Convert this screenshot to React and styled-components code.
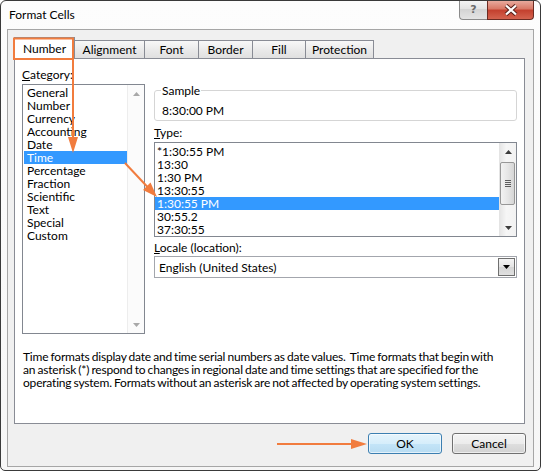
import React from 'react';
import styled, { createGlobalStyle } from 'styled-components';

const GlobalStyle = createGlobalStyle`
  html, body {
    margin: 0;
    padding: 0;
    background: #ffffff;
  }
  body {
    font-family: Lato, "Noto Sans", sans-serif;
    font-size: 12px;
    color: #000;
  }
`;

const Window = styled.div`
  position: relative;
  width: 541px;
  height: 471px;
  box-sizing: border-box;
  border: 1px solid #3a3a3a;
  border-radius: 6px 6px 5px 5px;
  background: linear-gradient(#fdfdfd, #f6f6f6);
  display: flex;
  flex-direction: column;
  overflow: hidden;
`;

const TitleBar = styled.div`
  height: 28px;
  flex: none;
  display: flex;
  justify-content: space-between;
  align-items: flex-start;
`;

const Title = styled.div`
  line-height: 28px;
  padding-left: 8px;
`;

const Caption = styled.div`
  display: flex;
  margin-top: -1px;
  margin-right: 6px;
`;

const HelpButton = styled.div`
  width: 28px;
  height: 20px;
  box-sizing: border-box;
  border: 1px solid #8a8a8a;
  border-top: none;
  border-right: none;
  border-radius: 0 0 0 4px;
  background: linear-gradient(#f6f6f6, #e2e2e2 50%, #d4d4d4 50%, #e4e4e4);
  display: flex;
  align-items: center;
  justify-content: center;
  color: #6a6a6a;
  font-family: "DejaVu Sans", sans-serif;
  font-size: 11px;
  font-weight: bold;
`;

const CloseButton = styled.div`
  width: 47px;
  height: 20px;
  box-sizing: border-box;
  border: 1px solid #6b2b22;
  border-top: none;
  border-radius: 0 0 4px 0;
  background: linear-gradient(#eab0a4, #d97a68 45%, #c4412f 55%, #d4634f);
  display: flex;
  align-items: center;
  justify-content: center;
`;

const Client = styled.div`
  flex: 1;
  margin: 0 6px 3px;
  border: 1px solid #a6a6a6;
  background: #f0f0f0;
  padding: 7px 0 0 6px;
  display: flex;
  flex-direction: column;
`;

const TabStrip = styled.div`
  display: flex;
  align-items: flex-end;
  height: 21px;
  position: relative;
  z-index: 1;
`;

const Tab = styled.div`
  width: ${({ $w }) => $w}px;
  height: ${({ $active }) => ($active ? 22 : 18)}px;
  margin-bottom: ${({ $active }) => ($active ? -1 : 0)}px;
  margin-right: -1px;
  box-sizing: border-box;
  border: 1px solid #898c95;
  border-bottom: none;
  background: ${({ $active }) => ($active ? '#ffffff' : 'linear-gradient(#f8f8f8, #e8e8e8 60%, #e0e0e0)')};
  text-align: center;
  line-height: ${({ $active }) => ($active ? 21 : 17)}px;
  white-space: nowrap;
`;

const Panel = styled.div`
  width: 511px;
  height: 366px;
  box-sizing: border-box;
  border: 1px solid #898c95;
  background: #ffffff;
  padding: 9px 7px 0;
  display: flex;
  flex-direction: column;
`;

const TopGrid = styled.div`
  display: grid;
  grid-template-columns: 123px 363px;
  column-gap: 9px;
  align-items: start;
`;

const Column = styled.div`
  display: flex;
  flex-direction: column;
`;

const Label = styled.div`
  line-height: 14px;
  height: ${({ $h }) => $h || 16}px;
  margin-top: ${({ $mt }) => $mt || 0}px;
  white-space: nowrap;
`;

const ListBox = styled.div`
  height: ${({ $h }) => $h}px;
  box-sizing: border-box;
  border: 1px solid #828790;
  background: #ffffff;
  display: flex;
`;

const Items = styled.div`
  flex: 1;
  min-width: 0;
  padding-top: ${({ $pt }) => $pt}px;
  padding-left: ${({ $pl }) => $pl}px;
`;

const Item = styled.div`
  height: 13px;
  line-height: 13px;
  padding-left: ${({ $pl }) => $pl}px;
  white-space: nowrap;
  background: ${({ $selected }) => ($selected ? '#3399ff' : 'transparent')};
  color: ${({ $selected }) => ($selected ? '#ffffff' : '#000000')};
`;

const ScrollBar = styled.div`
  width: 17px;
  flex: none;
  display: flex;
  flex-direction: column;
  box-sizing: border-box;
  border-left: 1px solid ${({ $disabled }) => ($disabled ? '#ededed' : '#e4e4e4')};
  background: ${({ $disabled }) => ($disabled ? '#fbfbfb' : 'linear-gradient(90deg, #e6e6e6, #f6f6f6 40%, #f2f2f2)')};
`;

const ScrollArrow = styled.div`
  height: 17px;
  flex: none;
  display: flex;
  align-items: center;
  justify-content: center;
`;

const Track = styled.div`
  flex: 1;
  padding: 2px 1px 0 0;
`;

const Thumb = styled.div`
  height: 43px;
  box-sizing: border-box;
  border: 1px solid #979797;
  border-radius: 2px;
  background: linear-gradient(90deg, #f2f2f2, #e6e6e6 50%, #d6d6d6);
  display: flex;
  align-items: center;
  justify-content: center;
`;

const Grip = styled.div`
  width: 6px;
  height: 7px;
  background: repeating-linear-gradient(#5d5d5d 0 1px, transparent 1px 2px);
`;

const Group = styled.fieldset`
  margin: 16px 0 0;
  padding: 7px 6px 3px;
  border: 1px solid #d5d5d5;
  border-radius: 3px;
  min-width: 0;
`;

const Legend = styled.legend`
  padding: 0 1px;
  margin-left: 0;
  line-height: 13px;
`;

const GroupValue = styled.div`
  line-height: 13px;
  padding-left: 1px;
`;

const Select = styled.div`
  height: 22px;
  box-sizing: border-box;
  border: 1px solid #a3a6ad;
  background: #ffffff;
  display: flex;
  align-items: center;
  justify-content: space-between;
  padding-left: 4px;
`;

const DropButton = styled.div`
  width: 17px;
  height: 18px;
  margin-right: 1px;
  box-sizing: border-box;
  border: 1px solid #6f6f6f;
  background: linear-gradient(#f4f4f4, #e4e4e4 50%, #d4d4d4 50%, #e0e0e0);
  display: flex;
  align-items: center;
  justify-content: center;
`;

const Description = styled.div`
  margin-top: 16px;
  padding-left: 1px;
  line-height: 13px;
  letter-spacing: -0.2px;
  word-spacing: -0.7px;
  white-space: nowrap;
`;

const ButtonRow = styled.div`
  width: 512px;
  display: flex;
  justify-content: flex-end;
  gap: 10px;
  margin-top: 9px;
`;

const Button = styled.div`
  width: 74px;
  height: 21px;
  box-sizing: border-box;
  border: 1px solid ${({ $default }) => ($default ? '#3c7fb1' : '#707070')};
  border-radius: 3px;
  background: ${({ $default }) =>
    $default
      ? 'linear-gradient(#e6f4fc, #d6eefb 50%, #c4e5f8 50%, #b8dcf2)'
      : 'linear-gradient(#f4f4f4, #ececec 50%, #dfdfdf 50%, #d2d2d2)'};
  box-shadow: inset 0 0 0 1px rgba(255, 255, 255, 0.6);
  display: flex;
  align-items: center;
  justify-content: center;
`;

const Overlay = styled.svg`
  position: absolute;
  top: -1px;
  left: -1px;
  pointer-events: none;
  z-index: 5;
`;

const Triangle = ({ up, color = '#000' }) => (
  <svg width="7" height="4" viewBox="0 0 7 4">
    <polygon points={up ? '0,4 7,4 3.5,0' : '0,0 7,0 3.5,4'} fill={color} />
  </svg>
);

const categories = [
  'General',
  'Number',
  'Currency',
  'Accounting',
  'Date',
  'Time',
  'Percentage',
  'Fraction',
  'Scientific',
  'Text',
  'Special',
  'Custom',
];

const types = ['*1:30:55 PM', '13:30', '1:30 PM', '13:30:55', '1:30:55 PM', '30:55.2', '37:30:55'];

const tabs = [
  { label: 'Number', w: 61, active: true },
  { label: 'Alignment', w: 71 },
  { label: 'Font', w: 55 },
  { label: 'Border', w: 55 },
  { label: 'Fill', w: 54 },
  { label: 'Protection', w: 69 },
];

const orange = '#f17c3e';

export default function App() {
  return (
    <>
      <GlobalStyle />
      <Window>
        <TitleBar>
          <Title>Format Cells</Title>
          <Caption>
            <HelpButton>?</HelpButton>
            <CloseButton>
              <svg width="14" height="12" viewBox="0 0 14 12">
                <path d="M2 1.5 L12 10.5 M12 1.5 L2 10.5" stroke="#5a231c" strokeWidth="4.2" />
                <path d="M2 1.5 L12 10.5 M12 1.5 L2 10.5" stroke="#ffffff" strokeWidth="2.2" />
              </svg>
            </CloseButton>
          </Caption>
        </TitleBar>

        <Client>
          <TabStrip>
            {tabs.map((t) => (
              <Tab key={t.label} $w={t.w} $active={t.active}>
                {t.label}
              </Tab>
            ))}
          </TabStrip>

          <Panel>
            <TopGrid>
              <Column>
                <Label>
                  <u>C</u>ategory:
                </Label>
                <ListBox $h={250}>
                  <Items $pt={1} $pl={1}>
                    {categories.map((c) => (
                      <Item key={c} $pl={3} $selected={c === 'Time'}>
                        {c}
                      </Item>
                    ))}
                  </Items>
                  <ScrollBar $disabled>
                    <ScrollArrow>
                      <Triangle up color="#a8a8a8" />
                    </ScrollArrow>
                    <Track />
                    <ScrollArrow>
                      <Triangle color="#a8a8a8" />
                    </ScrollArrow>
                  </ScrollBar>
                </ListBox>
              </Column>

              <Column>
                <Group>
                  <Legend>Sample</Legend>
                  <GroupValue>8:30:00 PM</GroupValue>
                </Group>
                <Label $mt={5}>
                  <u>T</u>ype:
                </Label>
                <ListBox $h={95}>
                  <Items $pt={2} $pl={0}>
                    {types.map((t) => (
                      <Item key={t} $pl={2} $selected={t === '1:30:55 PM'}>
                        {t}
                      </Item>
                    ))}
                  </Items>
                  <ScrollBar>
                    <ScrollArrow>
                      <Triangle up color="#3c3c3c" />
                    </ScrollArrow>
                    <Track>
                      <Thumb>
                        <Grip />
                      </Thumb>
                    </Track>
                    <ScrollArrow>
                      <Triangle color="#3c3c3c" />
                    </ScrollArrow>
                  </ScrollBar>
                </ListBox>
                <Label $mt={4} $h={15}>
                  <u>L</u>ocale (location):
                </Label>
                <Select>
                  <span>English (United States)</span>
                  <DropButton>
                    <Triangle />
                  </DropButton>
                </Select>
              </Column>
            </TopGrid>

            <Description>
              Time formats display date and time serial numbers as date values.&nbsp; Time formats that begin with
              <br />
              an asterisk (*) respond to changes in regional date and time settings that are specified for the
              <br />
              operating system. Formats without an asterisk are not affected by operating system settings.
            </Description>
          </Panel>

          <ButtonRow>
            <Button $default>OK</Button>
            <Button>Cancel</Button>
          </ButtonRow>
        </Client>

        <Overlay width="541" height="471" viewBox="0 0 541 471">
          <path d="M14 38.5 H73 V59 H14 Z" fill="none" stroke={orange} strokeWidth="2" />
          <path d="M73 59 V139" stroke={orange} strokeWidth="2" />
          <polygon points="68,137 78,137 73,153" fill={orange} />
          <path d="M125 163 L148 187.5" stroke={orange} strokeWidth="2" />
          <polygon points="143,190 150.5,182.5 157,197" fill={orange} />
          <path d="M277 444 H355" stroke={orange} strokeWidth="2" />
          <polygon points="351,439 351,449 367,444" fill={orange} />
        </Overlay>
      </Window>
    </>
  );
}
